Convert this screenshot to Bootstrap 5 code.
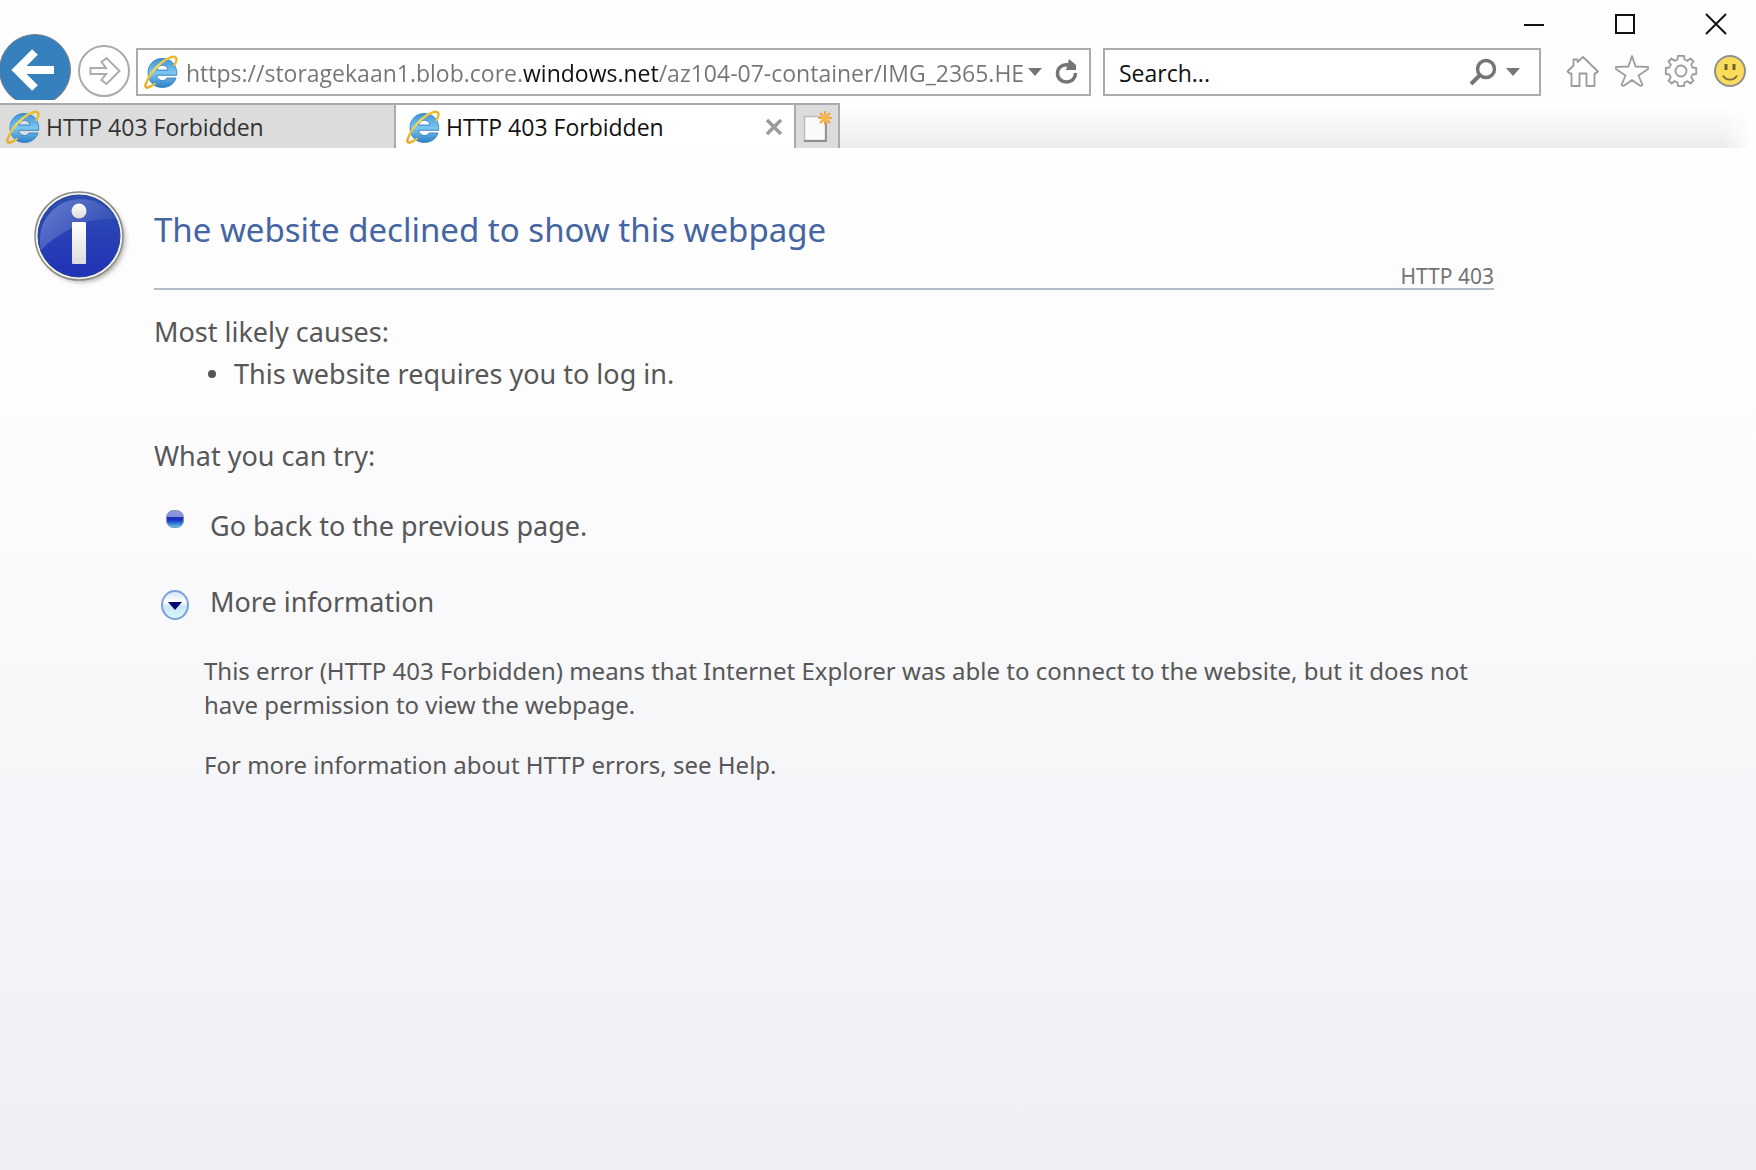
<!DOCTYPE html>
<html lang="en">
<head>
<meta charset="utf-8">
<meta name="viewport" content="width=device-width, initial-scale=1">
<title>HTTP 403 Forbidden</title>
<link rel="stylesheet" href="https://cdn.jsdelivr.net/npm/bootstrap@5.3.0/dist/css/bootstrap.min.css">
<style>
body{min-height:100vh;font-family:"Noto Sans","Open Sans",sans-serif;color:#575757;background:#fefefe}
svg{display:block;flex:none}
.chrome{font-family:"Open Sans","Noto Sans",sans-serif;font-size:23px}
.plain-btn{padding:0;border:0;background:none;line-height:0;flex:none}
.win-caption{height:44px;gap:67px;padding:4px 28px 0 0}
.toolbar{height:56px;padding-right:9px}
.back-btn{width:72px;height:66px;margin-top:-10px;overflow:hidden}
.fwd-btn{margin:0 5px 0 5px}
.field-box{height:48px;border:2px solid #ababab;background:#fff}
.field-box input{border:0;outline:0;padding:2px 0 0;min-width:0;height:44px;background-color:transparent}
.address-box{width:955px;padding:0 10px 0 6px}
.address-box input{color:transparent;background-image:linear-gradient(90deg,#757575 337px,#111 337px,#111 473px,#757575 473px);background-clip:text;-webkit-background-clip:text}
.search-box{width:438px;margin-left:12px;padding:0 18px 0 14px}
.search-box input::placeholder{color:#111;opacity:1}
.tool-icons{gap:15px}
.tab-row{height:48px;padding-top:3px}
.tab-item{height:45px;border-top:2px solid #ababab;border-right:2px solid #ababab;background:#dcdcdc;color:#333;padding-left:6px;gap:6px}
.tab-first{width:396px}
.tab-open{width:400px;background:#fff;color:#111;padding:0 11px 0 10px}
.tab-link{color:inherit;text-decoration:none;padding-top:2px}
.tab-new{width:44px;padding:0;border-left:0;border-bottom:0}
.tab-shade{height:41px;margin-right:6px;background:linear-gradient(#fefefe,#ececec);-webkit-mask-image:linear-gradient(90deg,#000 calc(100% - 26px),transparent);mask-image:linear-gradient(90deg,#000 calc(100% - 26px),transparent)}
.error-page{background:linear-gradient(#fefefe,#fcfcfd 30%,#eeeff4);padding:41px 32px 0}
.error-body{width:1340px}
.error-title{font-size:33px;line-height:44px;font-weight:400;color:#4465a2;margin:19px 0 12px}
.error-code{font-size:21px;line-height:24px;color:#747474;border-bottom:2px solid #b4bcc7}
.error-text{font-size:27px;line-height:42px;padding-top:21px}
.error-text h2{font-size:27px;line-height:42px;font-weight:400;margin:0}
.cause-list{list-style:none;padding-left:54px;margin:0 0 40px}
.cause-list li{gap:18px}
.dot{width:8px;height:8px;border-radius:50%;background:#575757}
.try-row{gap:14px}
.try-back{margin-top:28px}
.try-more{margin-top:34px}
.try-icon{width:42px}
.try-back .try-icon{padding-top:4px}
.try-more .try-icon{padding-top:8px}
.try-link,.try-link:hover{color:inherit;text-decoration:none}
.more-text{font-size:24px;line-height:34px;padding-left:50px;margin-top:31px}
.more-text p{margin:0 0 26px}
</style>
</head>
<body class="d-flex flex-column">
<svg width="0" height="0" class="position-absolute" aria-hidden="true">
<defs>
<linearGradient id="eBlue" x1="0" y1="0" x2="0" y2="1"><stop offset="0" stop-color="#3f93d6"/><stop offset=".5" stop-color="#7cc6f0"/><stop offset="1" stop-color="#2b80c8"/></linearGradient>
<linearGradient id="eGold" x1="0" y1="1" x2="1" y2="0"><stop offset="0" stop-color="#e3a722"/><stop offset=".5" stop-color="#fbdc55"/><stop offset="1" stop-color="#e9b326"/></linearGradient>
<symbol id="ie" viewBox="0 0 34 34">
<path d="M18 3.500C10 3.500 4 9.500 4 18C4 26.500 10 32.500 18.500 32.500C25 32.500 30 29 32 23H23C22 24.800 20.500 25.500 18.500 25.500C15.300 25.500 13 23.500 12.700 20.300H32.700C33.500 10.500 27.500 3.500 18 3.500ZM12.800 15C13.300 12 15.500 10.300 18.400 10.300C21.400 10.300 23.500 12 24 15Z" fill="url(#eBlue)" stroke="#2b7abb" stroke-width=".8"/>
<path d="M2.200 28C.8 31 1.200 33 4 32.500C6.300 32 8.500 30.500 10.500 28.800M2.600 27C6.500 17 16.500 6.500 25.500 2.800C30.500 .8 33.500 1.800 32.200 6C31.800 7.500 31.200 8.800 30.500 10" fill="none" stroke="url(#eGold)" stroke-width="2.400" stroke-linecap="round"/>
</symbol>
</defs>
</svg>

<header class="chrome">
<div class="win-caption d-flex justify-content-end align-items-center">
<button class="plain-btn" type="button" aria-label="Minimize"><svg width="24" height="24"><path d="M2 13H22" stroke="#111" stroke-width="2"/></svg></button>
<button class="plain-btn" type="button" aria-label="Maximize"><svg width="24" height="24"><rect x="3" y="3" width="18" height="18" fill="none" stroke="#111" stroke-width="2"/></svg></button>
<button class="plain-btn" type="button" aria-label="Close"><svg width="24" height="24"><path d="M2 2L22 22M22 2L2 22" stroke="#111" stroke-width="2"/></svg></button>
</div>

<div class="toolbar d-flex align-items-center">
<button class="plain-btn back-btn" type="button" aria-label="Back"><svg width="72" height="66" viewBox="0 0 72 66"><circle cx="35" cy="36" r="35.500" fill="#3580bd" stroke="#7b7b7b"/><path d="M54 36H18M35 18L17 36L35 54" fill="none" stroke="#fff" stroke-width="8"/></svg></button>
<button class="plain-btn fwd-btn" type="button" aria-label="Forward"><svg width="54" height="54" viewBox="0 0 54 54"><circle cx="27" cy="26" r="25" fill="#fff" stroke="#ababab" stroke-width="2"/><path d="M13.500 23H29L24.500 17L29.500 13L42.500 26L29.500 39L24.500 35L29 29H13.500Z" fill="none" stroke="#ababab" stroke-width="2"/></svg></button>
<div class="field-box address-box d-flex align-items-center">
<svg width="34" height="34" aria-hidden="true"><use href="#ie"/></svg>
<input class="flex-grow-1 ms-2" type="text" aria-label="Address" value="https://storagekaan1.blob.core.windows.net/az104-07-container/IMG_2365.HE">
<button class="plain-btn me-2" type="button" aria-label="Show address list"><svg width="16" height="8"><path d="M1 0H15L8 8Z" fill="#757575"/></svg></button>
<button class="plain-btn ms-1" type="button" aria-label="Refresh"><svg width="24" height="26" viewBox="0 0 24 26"><path d="M13 6C6 5 2.500 9.500 2.500 14.500C2.500 19.500 6.500 23 11.500 23C17 23 20.500 19 20.500 14" fill="none" stroke="#757575" stroke-width="3.500"/><path d="M14 0L21 6V11H11Z" fill="#757575"/></svg></button>
</div>
<div class="field-box search-box d-flex align-items-center">
<input class="flex-grow-1" type="text" aria-label="Search" placeholder="Search...">
<button class="plain-btn" type="button" aria-label="Search the web"><svg width="28" height="28" viewBox="0 0 28 28"><circle cx="17" cy="11" r="8.500" fill="none" stroke="#757575" stroke-width="3.500"/><path d="M11 17L2 26" stroke="#757575" stroke-width="4"/></svg></button>
<button class="plain-btn ms-2" type="button" aria-label="Search options"><svg width="16" height="8"><path d="M1 0H15L8 8Z" fill="#757575"/></svg></button>
</div>
<div class="tool-icons d-flex align-items-center ms-auto">
<button class="plain-btn" type="button" aria-label="Home"><svg width="34" height="34" viewBox="0 0 34 34" fill="none" stroke="#9b9b9b" stroke-width="1.800" stroke-linejoin="round"><path d="M17 2L32 16.500L29.500 18.500H28.500V31H20.500V18.500H13.500V31H5.500V18.500H4L1.500 16.500L7.500 10.500V4.500H11.500V7Z"/></svg></button>
<button class="plain-btn" type="button" aria-label="Favorites"><svg width="34" height="34" viewBox="0 0 34 34" fill="none" stroke="#9b9b9b" stroke-width="1.800" stroke-linejoin="round"><path d="M17 1L20.500 11.500L33 11.800V14L23.500 20.500L27.500 30L25.500 31L17 25L8.500 31L6.500 30L10.500 20.500L1 14V11.800L13.500 11.500Z"/></svg></button>
<button class="plain-btn" type="button" aria-label="Tools"><svg width="34" height="34" viewBox="0 1 34 34" fill="none" stroke="#9b9b9b" stroke-width="1.800" stroke-linejoin="round"><circle cx="17" cy="17" r="5.500"/><path d="M13.500 5.500L14 1.800H20L20.500 5.500L23.500 6.800L26.500 4.500L29.500 7.500L27.200 10.500L28.500 13.500L32.200 14V20L28.500 20.500L27.200 23.500L29.500 26.500L26.500 29.500L23.500 27.200L20.500 28.500L20 32.200H14L13.500 28.500L10.500 27.200L7.500 29.500L4.500 26.500L6.800 23.500L5.500 20.500L1.800 20V14L5.500 13.500L6.800 10.500L4.500 7.500L7.500 4.500L10.500 6.800Z"/></svg></button>
<button class="plain-btn" type="button" aria-label="Send a smile"><svg width="34" height="34" viewBox="0 1 34 34"><circle cx="17" cy="17" r="15" fill="#fadb5a" stroke="#8f8f8f" stroke-width="2"/><path d="M13 10V16M21 10V16" stroke="#6e6535" stroke-width="3"/><path d="M10 21.500C13 27 21 27 24 21.500" fill="none" stroke="#7d7339" stroke-width="1.800"/></svg></button>
</div>
</div>

<div class="tab-row d-flex align-items-end">
<div class="tab-item tab-first d-flex align-items-center"><svg width="34" height="34" aria-hidden="true"><use href="#ie"/></svg><a class="tab-link" href="#">HTTP 403 Forbidden</a></div>
<div class="tab-item tab-open d-flex align-items-center"><svg width="34" height="34" aria-hidden="true"><use href="#ie"/></svg><a class="tab-link me-auto" href="#" aria-current="page">HTTP 403 Forbidden</a><button class="plain-btn" type="button" aria-label="Close tab"><svg width="18" height="18"><path d="M2 2L16 16M16 2L2 16" stroke="#9b9b9b" stroke-width="3.500"/></svg></button></div>
<button class="tab-item tab-new d-flex align-items-center justify-content-center" type="button" aria-label="New tab"><svg width="30" height="34" viewBox="0 0 30 34"><path d="M2.500 6.500H23.500V30.500H2.500Z" fill="#fafafa" stroke="#bcbcbc" stroke-width="1.500"/><path d="M2 31H24V12" fill="none" stroke="#8f8f8f" stroke-width="1.800"/><path d="M23 1V15M16 8H30M18 3L28 13M28 3L18 13" stroke="#f0a73c" stroke-width="2"/><circle cx="23" cy="8" r="4" fill="#f7b64f"/></svg></button>
<div class="tab-shade flex-grow-1"></div>
</div>
</header>

<main class="error-page flex-grow-1 d-flex align-items-start">
<svg width="98" height="100" viewBox="0 0 98 100" role="img" aria-label="Information">
<defs><linearGradient id="ball" x1="0" y1="0" x2="0" y2="1"><stop offset="0" stop-color="#2d4fb0"/><stop offset="1" stop-color="#2232b8"/></linearGradient><linearGradient id="shine" x1="0" y1="0" x2="1" y2=".6"><stop offset="0" stop-color="#8b9be0" stop-opacity=".7"/><stop offset="1" stop-color="#5068c4" stop-opacity=".25"/></linearGradient><linearGradient id="silver" x1="0" y1="0" x2="0" y2="1"><stop offset="0" stop-color="#fff"/><stop offset="1" stop-color="#dcdcde"/></linearGradient><filter id="soft" x="-20%" y="-20%" width="140%" height="140%"><feGaussianBlur stdDeviation="2.500"/></filter></defs>
<circle cx="50" cy="50" r="43" fill="#777" opacity=".6" filter="url(#soft)"/>
<circle cx="47" cy="47" r="44" fill="#f4f4f2" stroke="#8c8c88" stroke-width="1.500"/>
<circle cx="47" cy="47" r="41" fill="url(#ball)" stroke="#27408f"/>
<path d="M9 61A41 41 0 0 1 84 30Q60 28 38 40Q22 48 9 61Z" fill="url(#shine)"/>
<circle cx="47" cy="22" r="7.500" fill="url(#silver)"/><rect x="40" y="33" width="14" height="42" rx="1" fill="url(#silver)"/>
</svg>
<div class="error-body ms-4">
<h1 class="error-title">The website declined to show this webpage</h1>
<div class="error-code text-end">HTTP 403</div>
<div class="error-text">
<h2>Most likely causes:</h2>
<ul class="cause-list"><li class="d-flex align-items-center"><span class="dot"></span>This website requires you to log in.</li></ul>
<h2>What you can try:</h2>
<div class="try-row try-back d-flex"><span class="try-icon d-flex justify-content-center align-items-start"><svg width="20" height="20" viewBox="0 0 20 20"><defs><linearGradient id="bead" x1="0" y1="0" x2="0" y2="1"><stop offset="0" stop-color="#8f9ae0"/><stop offset=".35" stop-color="#8790dc"/><stop offset=".42" stop-color="#1724b4"/><stop offset=".62" stop-color="#1c46c8"/><stop offset="1" stop-color="#5fd0f0"/></linearGradient></defs><rect x="1.500" y="1.500" width="17" height="17" rx="7" fill="url(#bead)" stroke="#7c93b8"/></svg></span><a class="try-link" href="#">Go back to the previous page.</a></div>
<div class="try-row try-more d-flex"><span class="try-icon d-flex justify-content-center align-items-start"><svg width="30" height="32" viewBox="0 0 30 32"><defs><linearGradient id="disc" x1="0" y1="0" x2="0" y2="1"><stop offset="0" stop-color="#d3e4f8"/><stop offset=".4" stop-color="#fff"/><stop offset=".55" stop-color="#c8e6f4"/><stop offset="1" stop-color="#d9fbff"/></linearGradient></defs><ellipse cx="15" cy="16" rx="13" ry="14" fill="url(#disc)" stroke="#7f9fdc" stroke-width="2"/><path d="M8 13H22L15 21Z" fill="#06066e"/></svg></span><a class="try-link" href="#more" role="button" aria-expanded="true">More information</a></div>
</div>
<div class="more-text" id="more">
<p>This error (HTTP 403 Forbidden) means that Internet Explorer was able to connect to the website, but it does not have permission to view the webpage.</p>
<p>For more information about HTTP errors, see Help.</p>
</div>
</div>
</main>
<script src="https://cdn.jsdelivr.net/npm/bootstrap@5.3.0/dist/js/bootstrap.bundle.min.js"></script>
</body>
</html>
